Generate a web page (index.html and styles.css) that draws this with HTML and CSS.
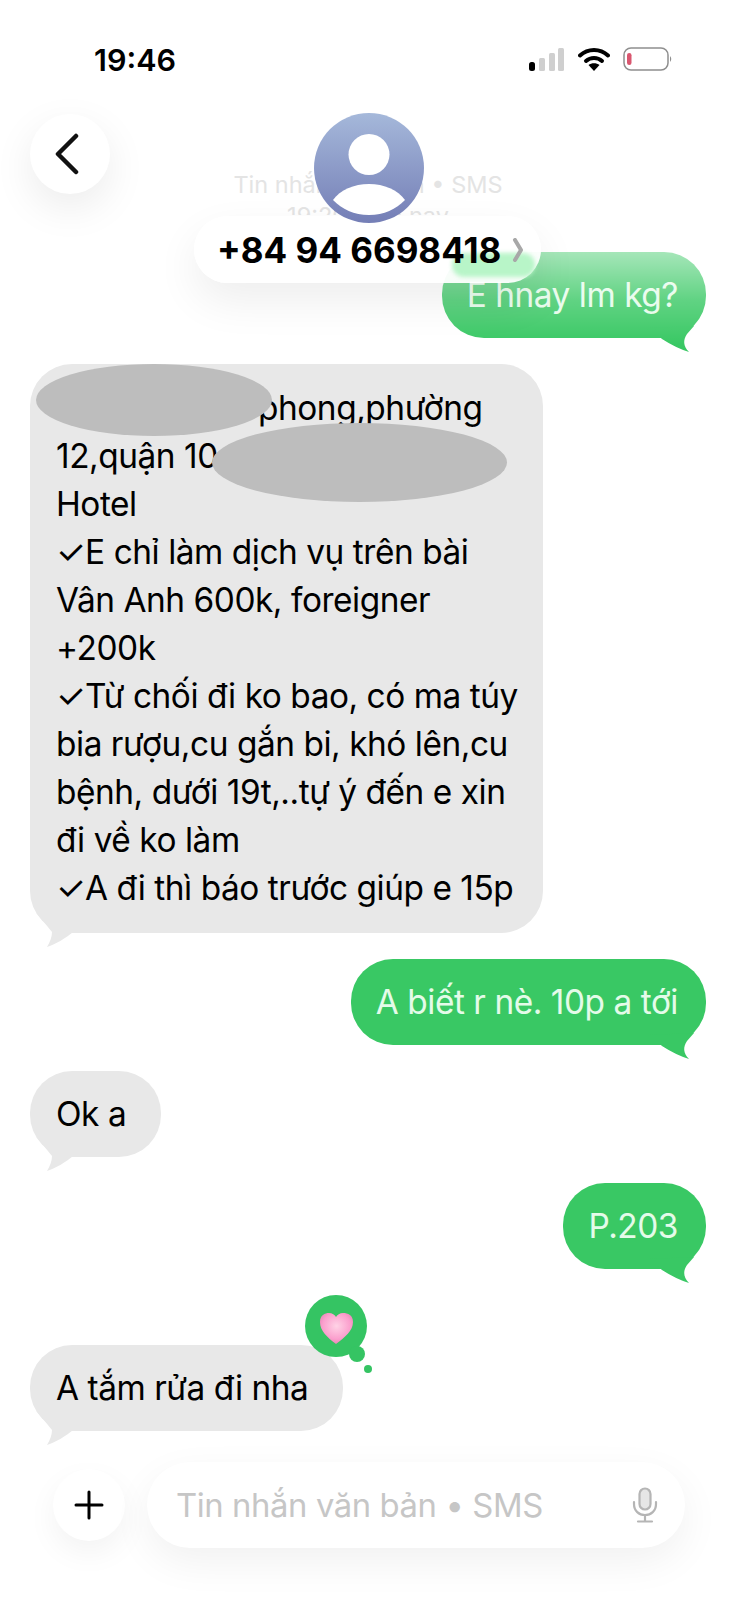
FILE: index.html
```html
<!DOCTYPE html>
<html lang="vi">
<head>
  <meta charset="UTF-8">
  <title>Tin nhắn</title>
  <link rel="stylesheet" href="styles.css">
</head>
<body>
  <svg class="defs" width="0" height="0">
    <symbol id="tail-out" viewBox="0 0 56 40"><path d="M0 14 L12 25 Q26 34 39 38 C33 32 33 26 37 20 L44 12 Z"/></symbol>
    <symbol id="tail-in" viewBox="0 0 50 44"><path d="M6.500 8 L22 27 C22 32 20 37 17 42 C26 39 36 33 43 27 L43 8 Z"/></symbol>
    <linearGradient id="avatar-fill" x1="0" y1="0" x2="0" y2="1">
      <stop offset="0" stop-color="#a5b8da"/>
      <stop offset="1" stop-color="#747eb6"/>
    </linearGradient>
    <radialGradient id="heart-fill" cx="0.5" cy="0.42" r="0.6">
      <stop offset="0" stop-color="#ffd3e6"/>
      <stop offset="0.7" stop-color="#fb9fcd"/>
      <stop offset="1" stop-color="#e884b6"/>
    </radialGradient>
  </svg>

  <div class="status-bar">
    <span class="clock">19:46</span>
    <div class="status-icons">
      <svg width="36" height="23" viewBox="0 0 36 23">
        <rect x="0" y="14" width="6" height="9" rx="2.5" fill="#000"/>
        <rect x="10" y="10" width="6" height="13" rx="1.5" fill="#cfcfcf"/>
        <rect x="20" y="5" width="6" height="18" rx="1.5" fill="#cfcfcf"/>
        <rect x="29" y="0" width="6" height="23" rx="1.5" fill="#cfcfcf"/>
      </svg>
      <svg width="32" height="24" viewBox="0 0 32 24">
        <path d="M2 8.5 C10 1 22 1 30 8.5" fill="none" stroke="#000" stroke-width="4" stroke-linecap="round"/>
        <path d="M8 14 C12.500 10 19.500 10 24 14" fill="none" stroke="#000" stroke-width="4" stroke-linecap="round"/>
        <path d="M16 24 L10.500 18 C13.500 15.500 18.500 15.500 21.500 18 Z" fill="#000"/>
      </svg>
      <svg width="50" height="24" viewBox="0 0 50 24">
        <rect x="1" y="1" width="44" height="22" rx="7" fill="#fff" stroke="#8e8e8e" stroke-width="1.500"/>
        <rect x="4" y="6" width="4.500" height="12" rx="2.200" fill="#d9566f"/>
        <path d="M47 9 Q49.500 12 47 15 Z" fill="#8e8e8e"/>
      </svg>
    </div>
  </div>

  <main class="thread">
    <div class="bubble out">E hnay lm kg?<svg class="tail"><use href="#tail-out"/></svg></div>

    <div class="bubble in long">
      <span class="covered"></span>phong,phường<br>
      12,quận 10<br>
      Hotel<br>
      ✓E chỉ làm dịch vụ trên bài<br>
      Vân Anh 600k, foreigner<br>
      +200k<br>
      ✓Từ chối đi ko bao, có ma túy<br>
      bia rượu,cu gắn bi, khó lên,cu<br>
      bệnh, dưới 19t,..tự ý đến e xin<br>
      đi về ko làm<br>
      ✓A đi thì báo trước giúp e 15p
      <span class="blot blot-one"></span>
      <span class="blot blot-two"></span>
      <svg class="tail"><use href="#tail-in"/></svg>
    </div>

    <div class="bubble out">A biết r nè. 10p a tới<svg class="tail"><use href="#tail-out"/></svg></div>
    <div class="bubble in">Ok a<svg class="tail"><use href="#tail-in"/></svg></div>
    <div class="bubble out">P.203<svg class="tail"><use href="#tail-out"/></svg></div>

    <div class="bubble in reacted">
      A tắm rửa đi nha
      <svg class="tail"><use href="#tail-in"/></svg>
      <svg class="tapback" width="70" height="80" viewBox="0 0 70 80">
        <circle cx="31" cy="31" r="31" fill="#35c463"/>
        <circle cx="52" cy="59" r="8" fill="#35c463"/>
        <circle cx="63" cy="74" r="4" fill="#35c463"/>
        <path d="M31 49 C22 42 15 36 15 27 C15 20 20 18 24 18 C27 18 30 20 31 22 C32 20 35 18 38 18 C43 18 48 20 48 27 C48 36 40 42 31 49 Z" fill="url(#heart-fill)"/>
      </svg>
    </div>
  </main>

  <div class="composer">
    <button class="plus">
      <svg width="30" height="30" viewBox="0 0 30 30"><path d="M15 2 V28 M2 15 H28" stroke="#000" stroke-width="3" stroke-linecap="round"/></svg>
    </button>
    <div class="field">
      <span class="placeholder">Tin nhắn văn bản • SMS</span>
      <svg width="26" height="36" viewBox="0 0 26 36" fill="none" stroke="#b5b5b5" stroke-width="2.200">
        <rect x="7.500" y="1.500" width="11" height="21" rx="5.500" fill="#e6e6e6"/>
        <path d="M2 15 V17 C2 24 7 28 13 28 C19 28 24 24 24 17 V15 M13 28 V34 M6 34.500 H20" stroke-linecap="round"/>
      </svg>
    </div>
  </div>

  <!-- blurred nav over the thread -->
  <header class="nav">
    <div class="nav-fade"></div>
    <button class="back">
      <svg width="30" height="42" viewBox="0 0 30 42"><path d="M24 3 L6 21 L24 39" fill="none" stroke="#111" stroke-width="4.500" stroke-linecap="round" stroke-linejoin="round"/></svg>
    </button>
    <div class="nav-sub">Tin nhắn văn bản • SMS</div>
    <div class="nav-time">19:20 hôm nay</div>
    <div class="contact">
      <span class="number">+84 94 6698418</span>
      <svg width="12" height="24" viewBox="0 0 12 24"><path d="M3 2 L9 12 L3 22" fill="none" stroke="#a8a8a8" stroke-width="4" stroke-linecap="round" stroke-linejoin="round"/></svg>
    </div>
    <svg class="avatar" width="110" height="110" viewBox="0 0 110 110">
      <circle cx="55" cy="55" r="55" fill="url(#avatar-fill)"/>
      <circle cx="55" cy="41.500" r="20.500" fill="#fff"/>
      <path d="M19 87 C26 77 40 71 55 71 C70 71 84 77 91 87 C82 96 70 102 55 102 C40 102 28 96 19 87 Z" fill="#fff"/>
    </svg>
  </header>
</body>
</html>
```

FILE: styles.css
```css
html, body {
  margin: 0;
  padding: 0;
}
body {
  position: relative;
  width: 736px;
  height: 1600px;
  overflow: hidden;
  background: #fff;
  color: #000;
  font-family: Inter, "Noto Sans", sans-serif;
}
.defs {
  position: absolute;
}

/* status bar */
.status-bar {
  position: relative;
  z-index: 2;
  display: flex;
  justify-content: space-between;
  align-items: center;
  height: 24px;
  padding: 47px 63px 0 94px;
}
.clock {
  font-size: 30.500px;
  font-weight: 600;
}
.status-icons {
  display: flex;
  align-items: center;
  gap: 13px;
}

/* messages */
.thread {
  display: flex;
  flex-direction: column;
  gap: 26px;
  padding: 181px 30px 0;
}
.bubble {
  position: relative;
  padding: 19px 28px 19px 25px;
  border-radius: 42px;
  font-size: 33.400px;
  line-height: 48px;
  letter-spacing: -0.45px;
  white-space: nowrap;
}
.bubble.out {
  align-self: flex-end;
  background: #39c864;
  color: #e4fbe9;
}
.bubble.in {
  align-self: flex-start;
  padding-left: 26px;
  padding-right: 35px;
  background: #e8e8e8;
}
.bubble.long {
  width: 452px;
  padding-top: 20px;
  padding-bottom: 21px;
}
.bubble.reacted {
  margin-top: 50px;
}
.tail {
  position: absolute;
}
.out .tail {
  right: 0;
  bottom: -16px;
  width: 56px;
  height: 40px;
  fill: #39c864;
}
.in .tail {
  left: 0;
  bottom: -16px;
  width: 50px;
  height: 44px;
  fill: #e8e8e8;
}
.tapback {
  position: absolute;
  left: 275px;
  top: -50px;
}
.covered {
  display: inline-block;
  width: 202px;
}
.blot {
  position: absolute;
  border-radius: 50%;
  background: #bdbdbd;
}
.blot-one {
  left: 6px;
  top: 0;
  width: 236px;
  height: 72px;
}
.blot-two {
  left: 182px;
  top: 59px;
  width: 295px;
  height: 79px;
}

/* composer */
.composer {
  display: flex;
  align-items: center;
  gap: 22px;
  margin-top: 31px;
  padding: 0 51px 0 53px;
}
.plus {
  flex: none;
  width: 72px;
  height: 72px;
  padding: 0;
  display: flex;
  align-items: center;
  justify-content: center;
  border: none;
  border-radius: 50%;
  background: #fff;
  box-shadow: 0 12px 30px rgba(0, 0, 0, 0.05);
}
.field {
  flex: 1;
  height: 86px;
  display: flex;
  align-items: center;
  justify-content: space-between;
  padding: 0 27px 0 29px;
  border-radius: 43px;
  background: #fff;
  box-shadow: 0 14px 40px rgba(0, 0, 0, 0.06);
}
.placeholder {
  font-size: 32.800px;
  letter-spacing: -0.4px;
  color: #c6c6c6;
}

/* nav over the thread */
.nav {
  position: absolute;
  left: 0;
  top: 0;
  width: 736px;
  height: 345px;
}
.nav-fade {
  position: absolute;
  inset: 0;
  background: linear-gradient(to bottom, #fff 0, #fff 215px, rgba(255, 255, 255, 0.55) 252px, rgba(255, 255, 255, 0.2) 300px, rgba(255, 255, 255, 0) 345px);
}
.back {
  position: absolute;
  left: 30px;
  top: 114px;
  width: 80px;
  height: 80px;
  padding: 0 6px 0 0;
  border: none;
  border-radius: 50%;
  background: #fff;
  box-shadow: 0 14px 40px rgba(0, 0, 0, 0.08);
  display: flex;
  align-items: center;
  justify-content: center;
}
.nav-sub,
.nav-time {
  position: absolute;
  left: 0;
  width: 736px;
  text-align: center;
  color: #e4e4e4;
  font-size: 23.500px;
}
.nav-sub {
  top: 170px;
}
/* only the top of this line shows above the contact pill */
.nav-time {
  top: 202px;
  height: 13px;
  line-height: 28px;
  overflow: hidden;
}
.avatar {
  position: absolute;
  left: 314px;
  top: 113px;
}
.contact {
  position: absolute;
  left: 194px;
  top: 216px;
  width: 347px;
  height: 67px;
  display: flex;
  align-items: center;
  gap: 11px;
  padding-left: 23px;
  box-sizing: border-box;
  border-radius: 34px;
  background: rgba(255, 255, 255, 0.94);
  box-shadow: 0 18px 44px rgba(0, 0, 0, 0.07);
}
.contact::after {
  content: "";
  position: absolute;
  left: 258px;
  right: 6px;
  top: 37px;
  bottom: 6px;
  border-radius: 14px;
  background: #b8f5c8;
  filter: blur(2px);
}
.number {
  position: relative;
  z-index: 1;
  font-size: 35px;
  font-weight: 700;
}
.contact svg {
  position: relative;
  z-index: 1;
}
```
